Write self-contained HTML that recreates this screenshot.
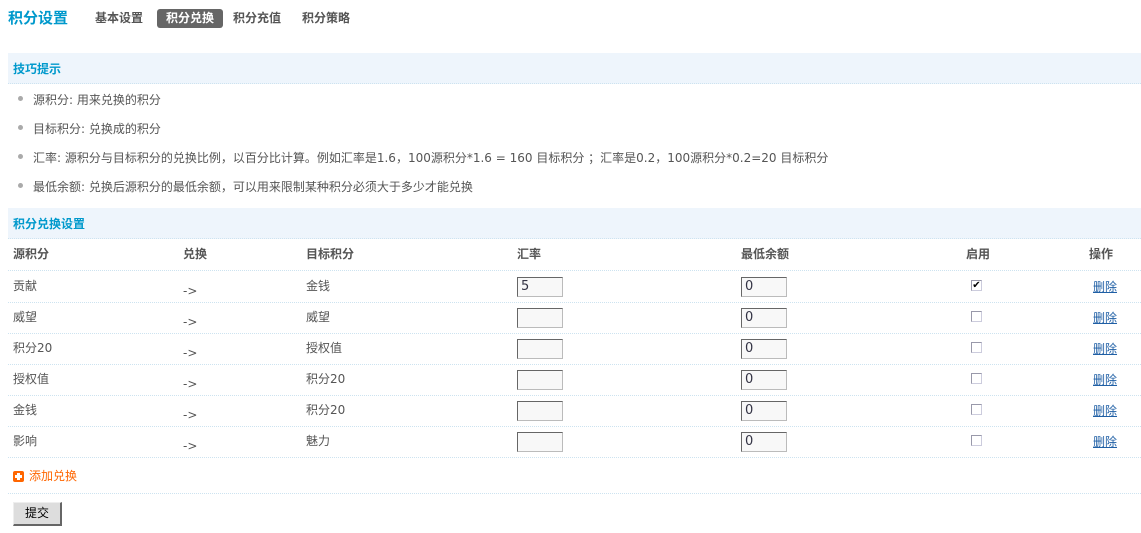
<!DOCTYPE html>
<html><head><meta charset="utf-8"><style>
*{margin:0;padding:0;box-sizing:border-box}
body{width:1141px;height:533px;background:#fff;font-family:"DejaVu Sans","Noto Sans CJK SC",sans-serif;font-size:12px;color:#555;position:relative;overflow:hidden}
.a{position:absolute;white-space:nowrap;line-height:14px}
.t{left:8px;top:9px;font-size:15px;font-weight:bold;color:#09c;line-height:18px}
.tab{top:11px;font-weight:bold;color:#555}
.act{left:157px;top:9px;width:66px;height:19px;background:#666;border-radius:3px;color:#fff;font-weight:bold;text-align:center;line-height:19px;position:absolute}
.band{position:absolute;left:8px;width:1133px;height:31px;background:#eef5fc;border-bottom:1px dotted #cde3f0}
.band span{position:absolute;left:5px;top:9px;font-weight:bold;color:#09c;line-height:14px}
.li{left:33px}
.dot{position:absolute;left:18px;width:5px;height:5px;border-radius:50%;background:#aaa}
.line{position:absolute;left:8px;width:1133px;border-top:1px dotted #cde3f0}
.th{font-weight:bold;color:#555}
.in{position:absolute;width:46px;height:20px;border:1px solid #bbb;border-top-color:#666;border-left-color:#666;background:#f8f8f8;font-size:13px;padding-left:3px;line-height:18px;color:#334}
.cb{position:absolute;left:971px;width:11px;height:11px;border:1px solid #ccd;border-top-color:#99a;border-left-color:#99a;background:#fff;font-size:10px;line-height:9px;color:#000;text-align:center}
.del{left:1093px;color:#1f5fa5;text-decoration:underline}
</style></head><body>
<div class="a t">积分设置</div>
<div class="a tab" style="left:95px">基本设置</div>
<div class="act">积分兑换</div>
<div class="a tab" style="left:233px">积分充值</div>
<div class="a tab" style="left:302px">积分策略</div>

<div class="band" style="top:53px"><span>技巧提示</span></div>
<div class="dot" style="top:96px"></div><div class="a li" style="top:93px">源积分: 用来兑换的积分</div>
<div class="dot" style="top:125px"></div><div class="a li" style="top:122px">目标积分: 兑换成的积分</div>
<div class="dot" style="top:154px"></div><div class="a li" style="top:151px">汇率: 源积分与目标积分的兑换比例，以百分比计算。例如汇率是1.6，100源积分*1.6 = 160 目标积分 ；汇率是0.2，100源积分*0.2=20 目标积分</div>
<div class="dot" style="top:183px"></div><div class="a li" style="top:180px">最低余额: 兑换后源积分的最低余额，可以用来限制某种积分必须大于多少才能兑换</div>

<div class="band" style="top:208px"><span>积分兑换设置</span></div>
<div class="a th" style="left:13px;top:247px">源积分</div>
<div class="a th" style="left:183px;top:247px">兑换</div>
<div class="a th" style="left:306px;top:247px">目标积分</div>
<div class="a th" style="left:517px;top:247px">汇率</div>
<div class="a th" style="left:741px;top:247px">最低余额</div>
<div class="a th" style="left:966px;top:247px">启用</div>
<div class="a th" style="left:1089px;top:247px">操作</div>

<div class="line" style="top:270px"></div>
<div class="a" style="left:13px;top:279px">贡献</div><div class="a" style="left:183px;top:284px">-&gt;</div><div class="a" style="left:306px;top:279px">金钱</div>
<div class="in" style="left:517px;top:277px">5</div><div class="in" style="left:741px;top:277px">0</div><div class="cb" style="top:280px">✔</div><div class="a del" style="top:280px">删除</div>
<div class="line" style="top:302px"></div>
<div class="a" style="left:13px;top:310px">威望</div><div class="a" style="left:183px;top:315px">-&gt;</div><div class="a" style="left:306px;top:310px">威望</div>
<div class="in" style="left:517px;top:308px"></div><div class="in" style="left:741px;top:308px">0</div><div class="cb" style="top:311px"></div><div class="a del" style="top:311px">删除</div>
<div class="line" style="top:333px"></div>
<div class="a" style="left:13px;top:341px">积分20</div><div class="a" style="left:183px;top:346px">-&gt;</div><div class="a" style="left:306px;top:341px">授权值</div>
<div class="in" style="left:517px;top:339px"></div><div class="in" style="left:741px;top:339px">0</div><div class="cb" style="top:342px"></div><div class="a del" style="top:342px">删除</div>
<div class="line" style="top:364px"></div>
<div class="a" style="left:13px;top:372px">授权值</div><div class="a" style="left:183px;top:377px">-&gt;</div><div class="a" style="left:306px;top:372px">积分20</div>
<div class="in" style="left:517px;top:370px"></div><div class="in" style="left:741px;top:370px">0</div><div class="cb" style="top:373px"></div><div class="a del" style="top:373px">删除</div>
<div class="line" style="top:395px"></div>
<div class="a" style="left:13px;top:403px">金钱</div><div class="a" style="left:183px;top:408px">-&gt;</div><div class="a" style="left:306px;top:403px">积分20</div>
<div class="in" style="left:517px;top:401px"></div><div class="in" style="left:741px;top:401px">0</div><div class="cb" style="top:404px"></div><div class="a del" style="top:404px">删除</div>
<div class="line" style="top:426px"></div>
<div class="a" style="left:13px;top:434px">影响</div><div class="a" style="left:183px;top:439px">-&gt;</div><div class="a" style="left:306px;top:434px">魅力</div>
<div class="in" style="left:517px;top:432px"></div><div class="in" style="left:741px;top:432px">0</div><div class="cb" style="top:435px"></div><div class="a del" style="top:435px">删除</div>
<div class="line" style="top:457px"></div>

<div style="position:absolute;left:13px;top:471px;width:11px;height:11px;background:#f60;border-radius:2px"><div style="position:absolute;left:4px;top:2px;width:3px;height:7px;background:#fff"></div><div style="position:absolute;left:2px;top:4px;width:7px;height:3px;background:#fff"></div></div>
<div class="a" style="left:29px;top:469px;color:#f60">添加兑换</div>
<div class="line" style="top:493px"></div>
<div style="position:absolute;left:13px;top:502px;width:49px;height:24px;background:#ddd;border:1px solid #888;border-top-color:#eee;border-left-color:#eee;border-right:2px solid #666;border-bottom:2px solid #666;color:#000;text-align:center;line-height:21px">提交</div>
</body></html>
